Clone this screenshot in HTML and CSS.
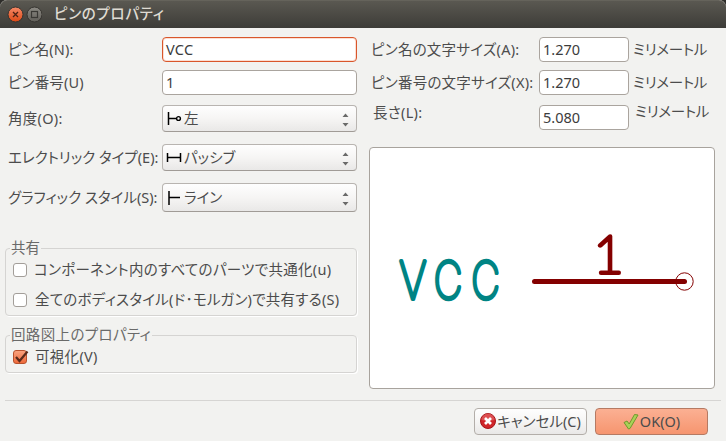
FILE: index.html
```html
<!DOCTYPE html>
<html lang="ja">
<head>
<meta charset="utf-8">
<title>ピンのプロパティ</title>
<link rel="stylesheet" href="styles.css">
</head>
<body>
<div class="dialog">
  <header class="titlebar">
    <svg class="winbtns" width="42" height="28" viewBox="0 0 42 28">
      <defs>
        <linearGradient id="red" x2="0" y2="1"><stop offset="0" stop-color="#f58a68"/><stop offset="1" stop-color="#dd4814"/></linearGradient>
        <linearGradient id="gray" x2="0" y2="1"><stop offset="0" stop-color="#8c8a84"/><stop offset="1" stop-color="#605e58"/></linearGradient>
      </defs>
      <circle cx="15.500" cy="14.500" r="7.500" fill="url(#red)" stroke="#35332f"/>
      <path d="M13 12l5 5M18 12l-5 5" stroke="#4b2114" stroke-width="1.300"/>
      <circle cx="34.500" cy="14.500" r="7.500" fill="url(#gray)" stroke="#35332f"/>
      <rect x="31.500" y="11.500" width="6" height="6" fill="none" stroke="#3a3935" stroke-width="1.200"/>
    </svg>
    <h1 class="title">ピンのプロパティ</h1>
  </header>
  <main class="content">
    <section class="left">
      <div class="form">
        <label class="lbl l-name">ピン名(N):</label><div class="field focus">VCC</div>
        <label class="lbl l-num">ピン番号(U)</label><div class="field">1</div>
        <label class="lbl l-angle">角度(O):</label>
        <div class="select">
          <svg width="16" height="16" viewBox="0 0 16 16" fill="none" stroke="#000"><path d="M2.500 1v13M2 7.500h8" stroke-width="1.500"/><circle cx="12.500" cy="7.500" r="1.900" stroke-width="1.400"/></svg>
          <span class="v-left">左</span>
          <svg class="arrows" width="7" height="14" viewBox="0 0 7 14"><path d="M.5 4L3.500 .5 6.500 4zM.5 10L3.500 13.500 6.500 10z" fill="#6a6a69"/></svg>
        </div>
        <label class="lbl l-elec">エレクトリック タイプ(E):</label>
        <div class="select">
          <svg width="16" height="16" viewBox="0 0 16 16" fill="none" stroke="#000"><path d="M1.500 3v9M14.500 3v9M1.500 7.500h13" stroke-width="1.500"/></svg>
          <span class="v-passive">パッシブ</span>
          <svg class="arrows" width="7" height="14" viewBox="0 0 7 14"><path d="M.5 4L3.500 .5 6.500 4zM.5 10L3.500 13.500 6.500 10z" fill="#6a6a69"/></svg>
        </div>
        <label class="lbl l-style">グラフィック スタイル(S):</label>
        <div class="select">
          <svg width="16" height="16" viewBox="0 0 16 16" fill="none" stroke="#000"><path d="M3 1v14M2.700 7.500h11.300" stroke-width="1.500"/></svg>
          <span class="v-line">ライン</span>
          <svg class="arrows" width="7" height="14" viewBox="0 0 7 14"><path d="M.5 4L3.500 .5 6.500 4zM.5 10L3.500 13.500 6.500 10z" fill="#6a6a69"/></svg>
        </div>
      </div>
      <fieldset class="group share">
        <legend class="g-share">共有</legend>
        <label class="check"><span class="box"></span><span class="c-parts">コンポーネント内のすべてのパーツで共通化(u)</span></label>
        <label class="check"><span class="box"></span><span class="c-body">全てのボディスタイル(ド･モルガン)で共有する(S)</span></label>
      </fieldset>
      <fieldset class="group schem">
        <legend class="g-schem">回路図上のプロパティ</legend>
        <label class="check"><span class="box on"><svg width="18" height="16" viewBox="0 0 18 16"><path d="M4 8l3.500 4L15.500 2.500" fill="none" stroke="#5a2a1a" stroke-width="2.200"/></svg></span><span class="c-vis">可視化(V)</span></label>
      </fieldset>
    </section>
    <section class="right">
      <div class="sizes">
        <label class="lbl s-name">ピン名の文字サイズ(A):</label><div class="field">1.270</div><span class="unit">ミリメートル</span>
        <label class="lbl s-num">ピン番号の文字サイズ(X):</label><div class="field">1.270</div><span class="unit">ミリメートル</span>
        <label class="lbl s-len">長さ(L):</label><div class="field">5.080</div><span class="unit u-len">ミリメートル</span>
      </div>
      <div class="preview">
        <svg width="344" height="240" viewBox="370 148 344 240">
          <g class="pin-name">
            <text transform="translate(399.300 298.500) scale(.82 1)">V</text>
            <text transform="translate(433.800 298.500) scale(.76 1)">C</text>
            <text transform="translate(471.300 298.500) scale(.76 1)">C</text>
          </g>
          <text class="pin-num" transform="translate(593.500 272.500)">1</text>
          <path d="M534.500 281.500H684.500" stroke="#840000" stroke-width="5" stroke-linecap="round"/>
          <circle cx="684.500" cy="281.500" r="8.700" fill="none" stroke="#840000"/>
        </svg>
      </div>
    </section>
  </main>
  <footer class="actions">
    <button class="btn">
      <svg width="16" height="16" viewBox="0 0 16 16"><circle cx="8" cy="8" r="7.500" fill="#cf2529" stroke="#a51419"/><path d="M1.500 7a6.500 6.500 0 0 1 13 0q-6.500 2-13 0z" fill="#e66b6c" opacity=".6"/><path d="M5 5l6 6M11 5l-6 6" stroke="#fff" stroke-width="2.700"/></svg>
      <span class="b-cancel">キャンセル(C)</span>
    </button>
    <button class="btn primary">
      <svg width="16" height="17" viewBox="0 0 16 17"><path d="M1 9.500l3-1.500 2.200 3L11.500 1.500 15 2 7 15.500 5.500 16z" fill="#a9d158" stroke="#6f9a2c" stroke-linejoin="round"/></svg>
      <span class="b-ok">OK(O)</span>
    </button>
  </footer>
</div>
</body>
</html>
```

FILE: styles.css
```css
* { box-sizing: border-box; }

body {
  margin: 0;
  width: 726px;
  height: 441px;
  overflow: hidden;
  background: #2e2d2a;
  font-family: "Noto Sans", "Noto Sans CJK JP", sans-serif;
  font-size: 14.5px;
  line-height: 20px;
  color: #4c4c4c;
  font-feature-settings: "palt";
  white-space: nowrap;
}

.dialog {
  height: 441px;
  display: flex;
  flex-direction: column;
  background: #f2f2f0;
  border-radius: 7px 7px 0 0;
}

.titlebar {
  height: 28px;
  display: flex;
  align-items: center;
  border-radius: 7px 7px 0 0;
  border-top: 1px solid #65635b;
  background: linear-gradient(#5a5851, #3d3c38);
}
.winbtns { margin-top: -1px; }
.title {
  margin: -3px 0 0 12px;
  font-size: 14.5px;
  font-weight: 500;
  color: #dfdbd2;
  letter-spacing: .7px;
}

.content {
  height: 373px;
  display: flex;
  border-bottom: 1px solid #d6d5d3;
  margin: 0 5px;
}

.left { width: 352px; margin-right: 12px; }
.form {
  display: grid;
  grid-template-columns: 154px 195px;
  grid-template-rows: 33px 33px 39px 39px 41px;
  padding: 5px 0 0 3px;
  align-items: center;
}
.lbl, .unit, .check span, .select span, legend { position: relative; top: -1px; }
.check .box { top: 0; }

.field {
  height: 25px;
  padding: 0 3px;
  line-height: 22px;
  border: 1px solid #aaa49e;
  border-radius: 4px;
  background: #fff;
  color: #3c3c3c;
}
.field.focus { border-color: #d9562b; box-shadow: inset 0 0 0 1px #fbded3; letter-spacing: .3px; }

.select {
  height: 27px;
  display: flex;
  align-items: center;
  padding: 0 7px 0 3px;
  border: 1px solid #b8b4b0;
  border-bottom-color: #a09b96;
  border-radius: 4px;
  background: linear-gradient(#fefefe, #f6f5f4 50%, #e9e8e7);
}
.form .select:last-child { height: 29px; }
.select span { margin-left: 2px; }
.arrows { margin-left: auto; margin-top: 3px; }

.group {
  margin: 0;
  min-width: 0;
  border: 1px solid #d5d4d2;
  border-radius: 4px;
  box-shadow: 1px 1px 0 #fff;
  padding: 0 0 0 7px;
}
.group legend { padding: 0 1px; margin-left: -3px; color: #6a6a69; height: 20px; }
.g-schem { letter-spacing: .35px; }
.share { height: 78px; margin-top: 20px; }
.schem { height: 48px; margin-top: 9px; }
.check { display: flex; align-items: center; height: 24px; }
.share .check:nth-of-type(2) { height: 36px; }
.c-parts { letter-spacing: .3px; margin-left: -1px; }
.c-body { letter-spacing: .25px; }
.c-vis { letter-spacing: .3px; }
.box {
  width: 14px;
  height: 14px;
  margin-right: 8px;
  border: 1px solid #a39e99;
  border-radius: 3px;
  background: #fff;
}
.box.on { background: linear-gradient(#f9a27d, #ee6a3c); border-color: #b8512c; }
.box.on svg { display: block; margin: -2px 0 0 -2px; }

.right { width: 346px; }
.sizes {
  display: grid;
  grid-template-columns: 168px 90px auto;
  grid-template-rows: 33px 33px 37px;
  align-items: center;
  padding: 5px 0 0 2px;
}
.s-name, .s-num { letter-spacing: .25px; }
.l-name, .l-num { letter-spacing: .15px; }
.l-angle { letter-spacing: .3px; }
.unit { padding-left: 4px; letter-spacing: -.25px; }
.s-len { padding-left: 2px; margin-top: -10px; letter-spacing: .3px; }
.u-len { padding-left: 6px; margin-top: -12px; }

.preview {
  height: 242px;
  margin-top: 11px;
  border: 1px solid #a8a39d;
  border-radius: 4px;
  background: #fff;
  overflow: hidden;
}
.preview svg { display: block; }
.preview text {
  stroke-linejoin: round;
  stroke-linecap: round;
  vector-effect: non-scaling-stroke;
}
.pin-name {
  font-family: Inter, sans-serif;
  font-weight: 100;
  font-size: 52px;
  fill: #008484;
  stroke: #008484;
  stroke-width: 3.6px;
}
.pin-num {
  font-family: Lato, sans-serif;
  font-weight: 100;
  font-size: 52px;
  fill: #840000;
  stroke: #840000;
  stroke-width: 4px;
}

.actions {
  display: flex;
  gap: 8px;
  padding: 7px 0 0 474px;
}
.btn {
  width: 113px;
  height: 27px;
  display: flex;
  align-items: center;
  justify-content: center;
  gap: 1px;
  padding: 0 0 1px;
  font: inherit;
  font-feature-settings: "palt";
  color: inherit;
  border: 1px solid #b3aea9;
  border-radius: 4px;
  background: linear-gradient(#fefefe, #f6f5f4 50%, #e9e8e7);
}
.btn.primary { border-color: #b57a63; background: linear-gradient(#fbb093, #f6956f); }
```
